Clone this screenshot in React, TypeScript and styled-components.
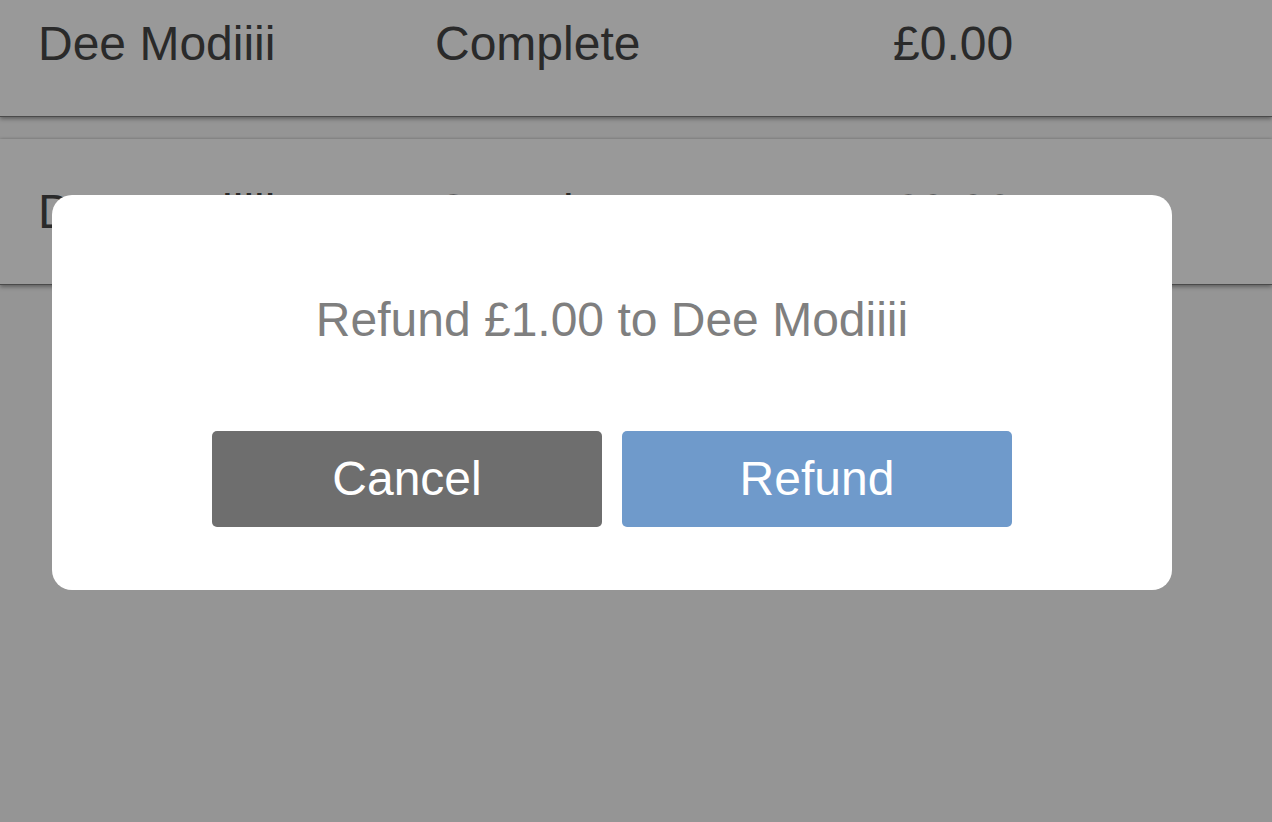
import styled, { createGlobalStyle } from "styled-components";

const GlobalStyle = createGlobalStyle`
    html, body {
        margin: 0;
        padding: 0;
        height: 100%;
        overflow: hidden;
        background: #f8f8f8;
        font-family: "Liberation Sans", Arial, Helvetica, sans-serif;
    }
`;

const Page = styled.div`
    display: flex;
    flex-direction: column;
    gap: 22px;
    margin-top: -29px;
`;

const Row = styled.div`
    display: grid;
    grid-template-columns: 397px 458px 1fr;
    align-items: center;
    height: 145px;
    padding-left: 38px;
    background: #ffffff;
    border-bottom: 1px solid #7c7c7c;
    box-shadow: 0 2px 4px rgba(0, 0, 0, 0.35), 0 -1px 2px rgba(0, 0, 0, 0.1);
    color: #474747;
    font-size: 48px;
    line-height: 48px;
`;

const Cell = styled.div`
    white-space: nowrap;
`;

const Overlay = styled.div`
    position: fixed;
    inset: 0;
    background: rgba(0, 0, 0, 0.4);
    display: flex;
    align-items: flex-start;
    padding: 195px 0 0 52px;
`;

const Dialog = styled.div`
    width: 1120px;
    box-sizing: border-box;
    background: #ffffff;
    border-radius: 20px;
    padding: 101px 0 63px;
    display: flex;
    flex-direction: column;
    align-items: center;
`;

const Message = styled.div`
    color: #7f7f7f;
    font-size: 48px;
    line-height: 48px;
    margin-bottom: 87px;
`;

const Actions = styled.div`
    display: flex;
    gap: 20px;
`;

const Button = styled.button<{ $tone: "neutral" | "primary" }>`
    width: 390px;
    height: 96px;
    border: none;
    border-radius: 5px;
    background: ${({ $tone }) => ($tone === "primary" ? "#6f9acb" : "#6e6e6e")};
    color: #ffffff;
    font-family: inherit;
    font-size: 48px;
    line-height: 48px;
    display: flex;
    align-items: center;
    justify-content: center;
    cursor: pointer;
`;

const orders = [
    { name: "Dee Modiiii", status: "Complete", amount: "£0.00" },
    { name: "Dee Modiiii", status: "Complete", amount: "£0.00" },
];

export default function App() {
    return (
        <>
            <GlobalStyle />
            <Page>
                {orders.map((o, i) => (
                    <Row key={i}>
                        <Cell>{o.name}</Cell>
                        <Cell>{o.status}</Cell>
                        <Cell>{o.amount}</Cell>
                    </Row>
                ))}
            </Page>
            <Overlay>
                <Dialog>
                    <Message>Refund £1.00 to Dee Modiiii</Message>
                    <Actions>
                        <Button $tone="neutral">Cancel</Button>
                        <Button $tone="primary">Refund</Button>
                    </Actions>
                </Dialog>
            </Overlay>
        </>
    );
}
